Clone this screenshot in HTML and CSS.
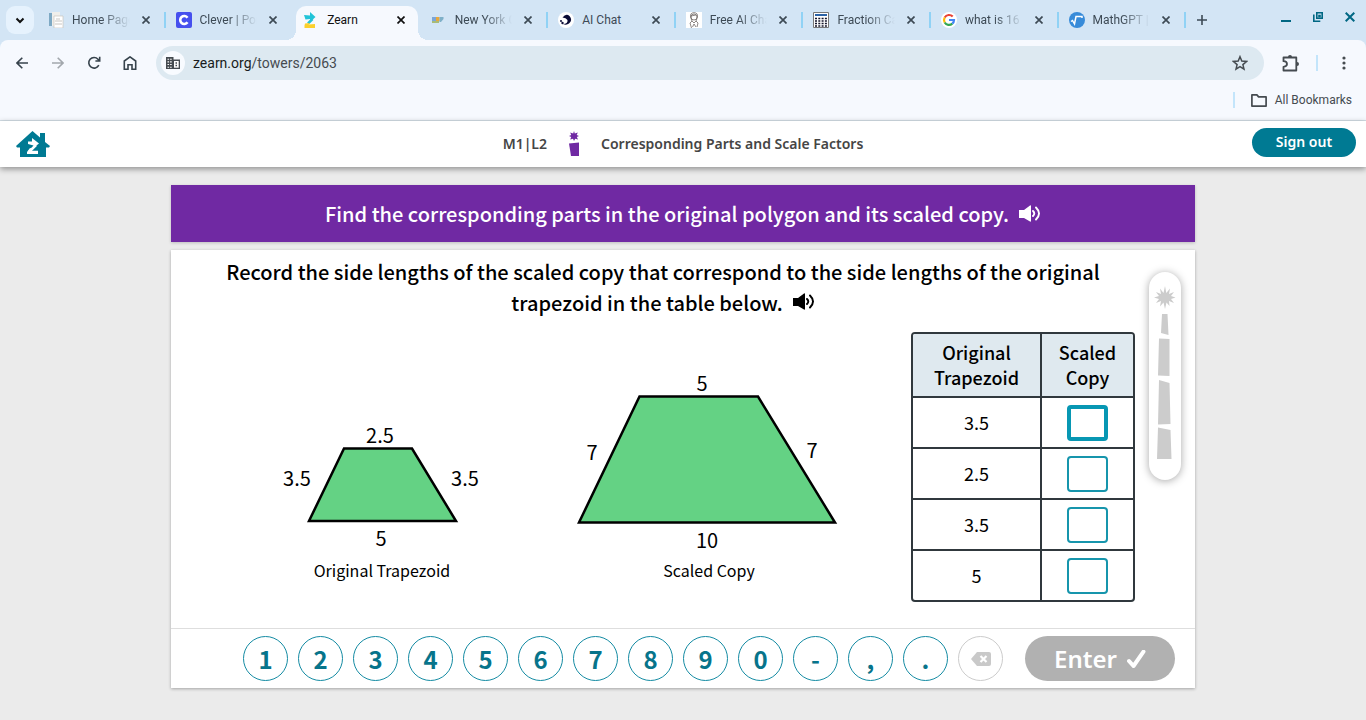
FILE: index.html
```html
<!DOCTYPE html>
<html lang="en">
<head>
<meta charset="utf-8">
<title>Zearn</title>
<link rel="stylesheet" href="styles.css">
</head>
<body>
<svg class="defs" aria-hidden="true">
  <symbol id="close" viewBox="0 0 8 8"><path d="M.5.5l7 7M7.500.5l-7 7" fill="none" stroke="currentColor" stroke-width="1.700"/></symbol>
  <symbol id="speaker" viewBox="0 0 22 18">
    <path d="M0 5h5L11 .5q1-.6 1 .5v15q0 1-1 .5L5 13H0z" fill="currentColor"/>
    <path d="M14 6q2.500 2.500 0 5M17 2.500q6 6 0 12" fill="none" stroke="currentColor" stroke-width="1.900" stroke-linecap="round"/>
  </symbol>
</svg>
<div class="browser">
  <div class="tabstrip">
    <button class="tab-search" aria-label="Search tabs"><svg width="10" height="7" viewBox="0 0 10 7"><path d="M1.500 1.500L5 5l3.500-3.500" fill="none" stroke="#111" stroke-width="2"/></svg></button>
    <div class="tabs">
      <div class="tab">
        <svg class="favicon" viewBox="0 0 16 16"><path d="M1 1h3v13H1z" fill="#7ea9c4"/><path d="M4 0h8v14H4z" fill="#f0efeb"/><path d="M6 4h9v12H6z" fill="#fff" stroke="#c8c4bd" stroke-width=".7"/><path d="M8 7h4M7 9h7M7 12h7" stroke="#c9c6c2"/></svg>
        <span class="tab-title fade">Home Page</span><button class="tab-close" aria-label="Close tab"><svg><use href="#close"/></svg></button>
      </div>
      <div class="tab no-sep-next">
        <svg class="favicon" viewBox="0 0 16 16"><rect width="16" height="16" rx="2" fill="#4650ee"/><path d="M11.500 5.700A4 4 0 1 0 11.500 10.300" fill="none" stroke="#fff" stroke-width="2.600"/></svg>
        <span class="tab-title fade">Clever | Portal</span><button class="tab-close" aria-label="Close tab"><svg><use href="#close"/></svg></button>
      </div>
      <div class="tab active">
        <svg class="favicon" viewBox="0 0 16 16"><path d="M7 0l5.500 5L7 10V7L2.500 7.500 1 3l6 .5z" fill="#22c4d8"/><path d="M9.500 7L5 11.500" stroke="#22c4d8" stroke-width="2.500"/><path d="M2 11.500l5-.5-1.500 1.500L12 12v4H1.500v-2.500z" fill="#fbd02d"/></svg>
        <span class="tab-title">Zearn</span><button class="tab-close" aria-label="Close tab"><svg><use href="#close"/></svg></button>
      </div>
      <div class="tab">
        <svg class="favicon" viewBox="0 0 16 16"><path d="M1 5h4v4H1z" fill="#7aa6d8"/><path d="M5 5h3.500v4H5z" fill="#e8a83c"/><path d="M8.500 5h4v2l-2.500 3H8.500z" fill="#7fb0c8"/><path d="M1 9h7v2H1z" fill="#a8bb78"/></svg>
        <span class="tab-title fade">New York City</span><button class="tab-close" aria-label="Close tab"><svg><use href="#close"/></svg></button>
      </div>
      <div class="tab">
        <svg class="favicon" viewBox="0 0 16 16"><circle cx="8" cy="8" r="8" fill="#fff"/><path d="M4.500 5.500Q8 1 11.500 4q3.500 4-.5 7.500-2.500 2-6 .5 5 0 4.500-4Q8 5.500 4.500 5.500z" fill="#090b36"/><circle cx="3" cy="9" r="1" fill="#090b36"/><circle cx="4.500" cy="11" r="1.200" fill="#090b36"/></svg>
        <span class="tab-title">AI Chat</span><button class="tab-close" aria-label="Close tab"><svg><use href="#close"/></svg></button>
      </div>
      <div class="tab">
        <svg class="favicon" viewBox="0 0 16 16"><path d="M0 0h16v16H0z" fill="#fff"/><g fill="none" stroke="#706a67" stroke-width=".8"><circle cx="8" cy="5" r="3"/><path d="M4.500 5Q4 .7 8 .7T11.500 5L10 9l2 2-1 4M4.500 5L6 9l-2 2 1.500 5M6 9l2 2 2-2M5 4l5-1M6.500 15L8 12l2 3"/></g></svg>
        <span class="tab-title fade">Free AI Chat</span><button class="tab-close" aria-label="Close tab"><svg><use href="#close"/></svg></button>
      </div>
      <div class="tab">
        <svg class="favicon" viewBox="0 0 16 16"><path d="M.5.5h15v15H.5z" fill="#fff" stroke="#777"/><path d="M2 2h12v2H2z" fill="#2b63a7"/><path d="M2 6.500h12M2 9h12M2 11.500h12M2 14h12" stroke="#14142a" stroke-width="1.700" stroke-dasharray="2 1.300"/></svg>
        <span class="tab-title fade">Fraction Calculator</span><button class="tab-close" aria-label="Close tab"><svg><use href="#close"/></svg></button>
      </div>
      <div class="tab">
        <svg class="favicon" viewBox="0 0 16 16"><circle cx="8" cy="8" r="8" fill="#fff"/><g fill="none" stroke-width="2.200"><path d="M11.700 4.600A5 5 0 0 0 3.700 5.500" stroke="#ea4335"/><path d="M3.700 5.500a5 5 0 0 0 0 5" stroke="#fbbc05"/><path d="M3.700 10.500a5 5 0 0 0 7.600 1.200" stroke="#34a853"/><path d="M11.300 11.700Q13 10.300 13 8H8" stroke="#4285f4"/></g></svg>
        <span class="tab-title fade">what is 16 as</span><button class="tab-close" aria-label="Close tab"><svg><use href="#close"/></svg></button>
      </div>
      <div class="tab">
        <svg class="favicon" viewBox="0 0 16 16"><circle cx="8" cy="8" r="8" fill="#378bd9"/><path d="M2 9.500l1.500-1L5.500 12 7 4.500h6V6" fill="none" stroke="#fff" stroke-width="1.500"/></svg>
        <span class="tab-title fade">MathGPT | AI</span><button class="tab-close" aria-label="Close tab"><svg><use href="#close"/></svg></button>
      </div>
    </div>
    <button class="new-tab" aria-label="New tab"><svg width="10" height="10" viewBox="0 0 10 10"><path d="M5 0v10M0 5h10" stroke="#3d4a55" stroke-width="1.600"/></svg></button>
    <div class="window-controls">
      <button aria-label="Minimize"><svg width="10" height="10" viewBox="0 0 10 10"><path d="M0 9h10" stroke="#006783" stroke-width="2"/></svg></button>
      <button aria-label="Restore"><svg width="10" height="10" viewBox="0 0 10 10"><path d="M3.800.8h5.400v5.400H3.800zM.8 2.500v6.700h6.500M6 3.500h1v1H6z" fill="none" stroke="#006783" stroke-width="1.600"/></svg></button>
      <button aria-label="Close window"><svg width="10" height="10" viewBox="0 0 10 10"><path d="M.7.700l8.600 8.600M9.300.700L.7 9.300" stroke="#006783" stroke-width="2"/></svg></button>
    </div>
  </div>
  <div class="toolbar">
    <button class="tool" aria-label="Back"><svg width="12" height="12" viewBox="0 0 12 12"><path d="M12 6H1.200M6.300.7L1 6l5.300 5.300" fill="none" stroke="#37434c" stroke-width="1.600"/></svg></button>
    <button class="tool" aria-label="Forward"><svg width="12" height="12" viewBox="0 0 12 12"><path d="M0 6h10.800M5.700.7L11 6l-5.300 5.300" fill="none" stroke="#a3a8ad" stroke-width="1.600"/></svg></button>
    <button class="tool" aria-label="Reload"><svg width="14" height="14" viewBox="0 0 14 14"><path d="M11.800 9.200A5.300 5.300 0 1 1 11 3.200L12.500 5M12.700.8V5H8.400" fill="none" stroke="#37434c" stroke-width="1.600"/></svg></button>
    <button class="tool" aria-label="Home"><svg width="14" height="14" viewBox="0 0 14 14"><path d="M1.300 13.200V5L7 .9 12.700 5v8.200H9V8.700H5v4.500z" fill="none" stroke="#37434c" stroke-width="1.600"/></svg></button>
    <div class="omnibox">
      <button class="site-info" aria-label="View site information"><svg width="14" height="12" viewBox="0 0 14 12"><path d="M0 0h7.500v2.500H14V12H0z" fill="#454b50"/><path d="M1.500 2.200h5M1.500 4.900h5M1.500 7.500h5M1.500 10.200h5" stroke="#fff" stroke-width="1.100" stroke-dasharray="1.600 1"/><path d="M8 4h4.700v6.700H8z" fill="#fff"/><path d="M9.500 6h1.500M9.500 8.500h1.500" stroke="#454b50" stroke-width="1.500"/></svg></button>
      <a class="url" href="#">zearn.org<span>/towers/2063</span></a>
      <button class="bookmark" aria-label="Bookmark this tab"><svg width="16" height="16" viewBox="0 0 16 16"><path d="M8 1.700l1.800 4.400 4.700.4-3.600 3.100 1.100 4.600L8 11.700l-4 2.500 1.100-4.600L1.500 6.500l4.700-.4z" fill="none" stroke="#454b50" stroke-width="1.500"/></svg></button>
    </div>
    <button class="extensions" aria-label="Extensions"><svg width="17" height="17" viewBox="0 0 17 17"><path d="M1.500 2.500h12.800v13H1.500v-3.700q3.500-.3 3.500-2.800T1.500 6.200z" fill="none" stroke="#454b50" stroke-width="1.800" stroke-linejoin="round"/><path d="M6 2a2 2 0 0 1 4 0zM15 7a2 2 0 0 1 0 4z" fill="#454b50"/></svg></button>
    <span class="divider"></span>
    <button class="menu" aria-label="Menu"><svg width="4" height="14" viewBox="0 0 4 14"><g fill="#454b50"><circle cx="2" cy="2" r="1.600"/><circle cx="2" cy="7" r="1.600"/><circle cx="2" cy="12" r="1.600"/></g></svg></button>
  </div>
  <div class="bookmarks">
    <span class="divider"></span>
    <button class="all-bookmarks"><svg width="16" height="13" viewBox="0 0 16 13"><path d="M.9.900h5l1.700 2h7.500v9.200H.9z" fill="none" stroke="#454b50" stroke-width="1.700" stroke-linejoin="round"/></svg>All Bookmarks</button>
  </div>
</div>

<header class="site-header">
  <a class="home-link" href="#" aria-label="Home"><svg width="34" height="26" viewBox="0 0 34 26"><path d="M0 15L16.500 0 24 6.500V2h5v9l5 4-1 1.500h-3V26H4v-9.500H1z" fill="#007a93"/><path d="M16 7l7 5.500-5.500 4.300v-2.300L12 13v-2.500h4zM14 17l3 .7-1.500 2H22V23H11v-2z" fill="#fff"/><path d="M20 14l-7 7" stroke="#fff" stroke-width="2.500"/></svg></a>
  <div class="lesson-info">
    <span>M1|L2</span>
    <svg width="10" height="25" viewBox="0 0 10 25"><path d="M5 0l.8 2.600L8.800 1.600 7.700 4l2.300 1-2.200 1 1.200 2.500-2.800-.7L5 10 4 7.800l-2.800.8L2.200 6 0 5l2.200-1L1.200 1.600l3 1z" fill="#7029a3"/><path d="M0 12.500l10-1V25H2z" fill="#7029a3"/></svg>
    <span>Corresponding Parts and Scale Factors</span>
  </div>
  <button class="sign-out">Sign out</button>
</header>

<main class="lesson">
  <h1 class="banner">Find the corresponding parts in the original polygon and its scaled copy.<button class="speak" aria-label="Read aloud"><svg><use href="#speaker"/></svg></button></h1>
  <section class="card">
    <div class="problem">
      <h2 class="prompt">Record the side lengths of the scaled copy that correspond to the side lengths of the original trapezoid in the table below.<button class="speak" aria-label="Read aloud"><svg><use href="#speaker"/></svg></button></h2>
      <div class="work">
        <figure>
          <svg width="224" height="136" viewBox="270 418 224 136" class="shape"><path d="M344 448.500h68L456 521H309z"/><text x="380" y="443">2.5</text><text x="297" y="486">3.5</text><text x="465" y="486">3.5</text><text x="381" y="546">5</text></svg>
          <figcaption>Original Trapezoid</figcaption>
        </figure>
        <figure>
          <svg width="290" height="184" viewBox="564 370 290 184" class="shape"><path d="M639.500 396.500H758L835 522.500H579z"/><text x="702" y="391">5</text><text x="592" y="460">7</text><text x="812" y="458">7</text><text x="707" y="548">10</text></svg>
          <figcaption>Scaled Copy</figcaption>
        </figure>
        <table class="lengths">
          <thead><tr><th scope="col">Original Trapezoid</th><th scope="col">Scaled Copy</th></tr></thead>
          <tbody>
            <tr><td>3.5</td><td><input class="current" type="text" aria-label="Scaled length for 3.5, left side"></td></tr>
            <tr><td>2.5</td><td><input type="text" aria-label="Scaled length for 2.5"></td></tr>
            <tr><td>3.5</td><td><input type="text" aria-label="Scaled length for 3.5, right side"></td></tr>
            <tr><td>5</td><td><input type="text" aria-label="Scaled length for 5"></td></tr>
          </tbody>
        </table>
      </div>
      <div class="progress"><svg width="22" height="174" viewBox="0 0 22 174" fill="#ccc"><path d="M11 0l1.300 7 3.700-4.500-1 5.500 5-2-3 4 4.500 1.500L17 13l3 4-5-2 .5 5-3-3.500L11 23l-1.500-6.500L6 20.500l1-5.500-5 2 3-4-5-1.500L5 10 2 6l5 2-1-5.500L9.500 7z"/><path d="M8 28h5.500l1 21L7 47zM5 52.500l10.500.5v37L4 89.500zM5 94l10.500 3 1 41L4 138.500zM4 141.500l12.500 2.500 1 29H3z"/></svg></div>
    </div>
    <div class="keypad">
      <button class="key">1</button><button class="key">2</button><button class="key">3</button><button class="key">4</button><button class="key">5</button><button class="key">6</button><button class="key">7</button><button class="key">8</button><button class="key">9</button><button class="key">0</button><button class="key">-</button><button class="key">,</button><button class="key">.</button><button class="key erase" aria-label="Backspace"><svg width="20" height="14" viewBox="0 0 20 14"><path d="M6 0h12q2 0 2 2v10q0 2-2 2H6L0 7z" fill="#c9c9c9"/><path d="M9.500 4l6 6M15.500 4l-6 6" stroke="#fff" stroke-width="2.200"/></svg></button>
      <button class="enter">Enter <svg width="19" height="18" viewBox="0 0 19 18"><path d="M2 11l4.500 5L16.500 1.700" fill="none" stroke="#fff" stroke-width="4" stroke-linecap="round" stroke-linejoin="round"/></svg></button>
    </div>
  </section>
</main>
</body>
</html>
```
FILE: styles.css
```css
* { box-sizing: border-box; }
body { margin: 0; min-height: 100vh; background: #ebebeb; color: #000; font-family: "Noto Sans CJK SC", "Noto Sans", sans-serif; }
button { margin: 0; padding: 0; border: 0; background: none; color: inherit; font: inherit; }
svg { display: block; flex: none; }
a { color: inherit; text-decoration: none; }
.defs { position: absolute; width: 0; height: 0; }

.browser { background: #d3e5f5; font-family: Roboto, sans-serif; font-size: 12px; color: #3d4a55; border-bottom: 1px solid #d5e0e8; }
.tabstrip { display: flex; height: 40px; padding: 0 11px 0 6px; }
.tab-search { display: grid; place-items: center; flex: none; width: 28px; height: 28px; margin: 6px 4px 0 0; border-radius: 9px; background: #e6f2fd; }
.tabs { display: flex; flex: 1; min-width: 0; }
.tab { position: relative; display: flex; flex: 1 1 0; align-items: center; min-width: 0; padding: 0 16px 0 10px; }
.tab::after { content: ""; position: absolute; right: 0; top: 12px; width: 2px; height: 16px; background: #90d2f5; }
.tab.no-sep-next::after { display: none; }
.favicon { width: 16px; height: 16px; margin-right: 8px; }
.tab-title { flex: 1; min-width: 0; overflow: hidden; white-space: nowrap; }
.fade { -webkit-mask-image: linear-gradient(90deg, #000 50%, transparent); mask-image: linear-gradient(90deg, #000 50%, transparent); }
.tab-close { margin-left: 12px; }
.tab-close svg { width: 8px; height: 8px; }
.tab.active { height: 34px; margin-top: 6px; padding-bottom: 6px; color: #111; isolation: isolate; }
.tab.active::before { content: ""; position: absolute; z-index: -1; inset: 0 3px 0 3px; background: #f6f9fe; border-radius: 10px 10px 0 0; }
.tab.active::after { z-index: -1; top: auto; bottom: 0; left: -7px; right: -7px; width: auto; height: 10px; background: radial-gradient(circle at 0 0, transparent 10px, #f6f9fe 10px) left / 10px 10px no-repeat, radial-gradient(circle at 100% 0, transparent 10px, #f6f9fe 10px) right / 10px 10px no-repeat; }
.new-tab { flex: none; margin-left: 11px; }
.window-controls { display: flex; align-items: center; gap: 22px; margin: 0 0 6px 74px; }
.toolbar { display: flex; align-items: center; height: 46px; padding: 0 20px 0 14px; background: #f6f9fe; border-radius: 8px 8px 0 0; }
.tool { display: grid; place-items: center; width: 16px; height: 28px; margin-right: 20px; }
.omnibox { display: flex; flex: 1; align-items: center; height: 34px; margin-left: -2px; padding: 0 16px 0 5px; border-radius: 17px; background: #dde9f1; font-size: 14px; }
.site-info { display: grid; place-items: center; width: 24px; height: 24px; border-radius: 50%; background: #f8fbff; }
.url { flex: 1; margin-left: 8px; color: #181c20; }
.url span { color: #454b50; }
.extensions { margin-left: 18px; }
.divider { width: 2px; height: 16px; background: #c3e5fb; }
.toolbar .divider { margin: 0 24px 0 17px; }
.bookmarks { display: flex; align-items: center; justify-content: flex-end; gap: 16px; height: 34px; padding: 0 14px 6px 0; background: #f6f9fe; color: #454b50; }
.all-bookmarks { display: flex; align-items: center; gap: 8px; }

.site-header { position: relative; display: grid; grid-template-columns: 1fr auto 1fr; align-items: center; height: 46px; padding: 0 10px; background: #fff; box-shadow: 0 2px 6px rgba(0, 0, 0, .4); font-family: "Noto Sans", "Open Sans", sans-serif; }
.home-link { margin-left: 6px; }
.lesson-info { display: flex; align-items: center; gap: 22px; padding-bottom: 2px; color: #454545; font-size: 14px; font-weight: 600; }
.sign-out { justify-self: end; width: 104px; height: 29px; margin-bottom: 4px; padding-bottom: 2px; border-radius: 15px; background: #007a93; color: #fff; font-size: 14px; font-weight: 600; }

.lesson { max-width: 1024px; margin: 18px auto 32px; }
.banner { display: flex; align-items: center; justify-content: center; min-height: 57px; margin: 0; background: #7029a3; color: #fff; font-size: 20px; font-weight: 500; line-height: 30px; box-shadow: 0 1px 3px rgba(0, 0, 0, .2); }
.speak { margin-left: 10px; }
.speak svg { width: 22px; height: 18px; }
.card { margin-top: 8px; background: #fff; box-shadow: 0 1px 3px rgba(0, 0, 0, .3); }
.problem { position: relative; padding: 6px 40px 26px; }
.prompt { margin: 0 40px 0 0; text-align: center; font-size: 20px; font-weight: 500; line-height: 31px; }
.prompt .speak { display: inline-block; }
.work { display: flex; align-items: flex-end; padding-left: 59px; margin-top: 14px; }
figure { margin: 0 70px 20px 0; text-align: center; }
figure + figure { margin-right: 57px; }
figcaption { margin-top: 4px; font-size: 16px; line-height: 24px; }
.shape path { fill: #64d284; stroke: #000; stroke-width: 2.5px; }
.shape text { font-size: 20px; text-anchor: middle; }
.lengths { border: 2px solid #30383d; border-radius: 4px; border-spacing: 0; overflow: hidden; width: 224px; table-layout: fixed; font-size: 18px; text-align: center; }
.lengths th, .lengths td { padding: 0; border-bottom: 2px solid #30383d; }
.lengths th { height: 64px; background: #dfe9ef; font-weight: 500; line-height: 25px; }
.lengths td { height: 51px; line-height: 25px; }
.lengths th:first-child { width: 129px; padding: 0 16px; }
.lengths th:last-child { padding: 0 16px; }
.lengths th:first-child, .lengths td:first-child { border-right: 2px solid #30383d; }
.lengths tr:last-child td { height: 49px; border-bottom: 0; }
.lengths input { display: block; width: 41px; height: 36px; margin: 0 auto; padding: 0; border: 2px solid #1695ac; border-radius: 4px; background: #fff; font: inherit; text-align: center; }
.lengths input.current { border-width: 4px; border-color: #0797b3; }
.progress { position: absolute; top: 22px; right: 14px; display: flex; justify-content: center; width: 32px; padding: 14px 0 20px; border-radius: 16px; background: #fff; box-shadow: 0 1px 8px rgba(0, 0, 0, .35); }
.keypad { display: flex; justify-content: flex-end; gap: 10px; padding: 7px 20px; border-top: 1px solid #dedede; }
.key { display: grid; place-items: center; width: 45px; height: 45px; border: 1px solid #148ba3; border-radius: 50%; color: #07748b; font-family: "Noto Sans CJK SC", sans-serif; font-size: 24px; font-weight: 700; line-height: 30px; }
.key.erase { border-color: #ccc; }
.enter { display: flex; align-items: center; justify-content: center; gap: 10px; width: 150px; height: 45px; margin-left: 12px; border-radius: 23px; background: #b1b1b1; color: #fff; font-family: "Noto Sans", "Open Sans", sans-serif; font-size: 24px; font-weight: 600; line-height: 30px; }
```
